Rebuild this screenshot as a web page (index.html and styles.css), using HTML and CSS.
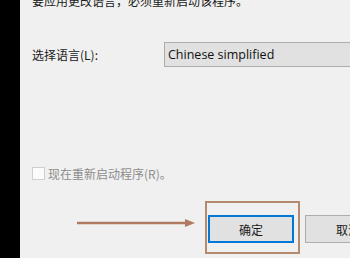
FILE: index.html
```html
<!DOCTYPE html>
<html lang="zh-CN">
<head>
<meta charset="utf-8">
<link rel="stylesheet" href="styles.css">
</head>
<body>
<div class="window">
  <div class="edge"></div>
  <div class="content">
    <p class="notice">要应用更改语言，必须重新启动该程序。</p>
    <div class="lang-row">
      <span class="label">选择语言(L):</span>
      <div class="combo">Chinese simplified</div>
    </div>
    <div class="check-row">
      <span class="checkbox"></span>
      <span class="check-label">现在重新启动程序(R)。</span>
    </div>
    <div class="buttons">
      <div class="btn btn-default">确定</div>
      <div class="btn">取消</div>
    </div>
    <svg class="arrow" width="124" height="12" viewBox="0 0 124 12">
      <line x1="0" y1="6" x2="110" y2="6" stroke="#b07a60" stroke-width="2.4"/>
      <polygon points="108,2 118,6 108,10" fill="#b07a60"/>
    </svg>
    <div class="frame"></div>
  </div>
</div>
</body>
</html>
```
FILE: styles.css
```css
html, body {
  margin: 0;
  padding: 0;
  background: #f0f0f0;
}
.window {
  display: flex;
  width: 350px;
  height: 258px;
  overflow: hidden;
  font-family: "Noto Sans CJK SC", "Noto Sans", sans-serif;
  font-size: 12px;
  color: #1a1a1a;
}
.edge {
  width: 20px;
  flex: none;
  background: #000;
}
.content {
  flex: 1;
  position: relative;
  padding-left: 12px;
  display: flex;
  flex-direction: column;
}
.notice {
  margin: -7px 0 0 0;
  line-height: 16px;
  white-space: nowrap;
}
.lang-row {
  display: flex;
  align-items: center;
  margin-top: 33px;
  height: 25px;
}
.label {
  width: 132px;
  flex: none;
  line-height: 16px;
}
.combo {
  box-sizing: border-box;
  flex: none;
  width: 200px;
  height: 25px;
  background: #e1e1e1;
  border: 1px solid #adadad;
  padding-left: 3px;
  line-height: 23px;
  font-family: "Open Sans", "Noto Sans", sans-serif;
  font-size: 12.5px;
  color: #111;
  white-space: nowrap;
}
.check-row {
  display: flex;
  align-items: center;
  margin-top: 100px;
  height: 13px;
}
.checkbox {
  box-sizing: border-box;
  width: 13px;
  height: 13px;
  border: 1px solid #cfcfcf;
  background: #fbfbfb;
  flex: none;
}
.check-label {
  margin-left: 3px;
  color: #8c8c8c;
  line-height: 16px;
  white-space: nowrap;
}
.buttons {
  display: flex;
  gap: 11px;
  margin-top: 35px;
  margin-left: 176px;
}
.btn {
  box-sizing: border-box;
  flex: none;
  width: 86px;
  height: 28px;
  background: #e1e1e1;
  border: 1px solid #adadad;
  display: flex;
  align-items: center;
  justify-content: center;
  white-space: nowrap;
}
.btn-default {
  border: 2px solid #0078d7;
}
.arrow {
  position: absolute;
  left: 57px;
  top: 217px;
}
.frame {
  position: absolute;
  box-sizing: border-box;
  left: 185px;
  top: 201px;
  width: 95px;
  height: 53px;
  border: 2px solid #b48a6e;
}
```
